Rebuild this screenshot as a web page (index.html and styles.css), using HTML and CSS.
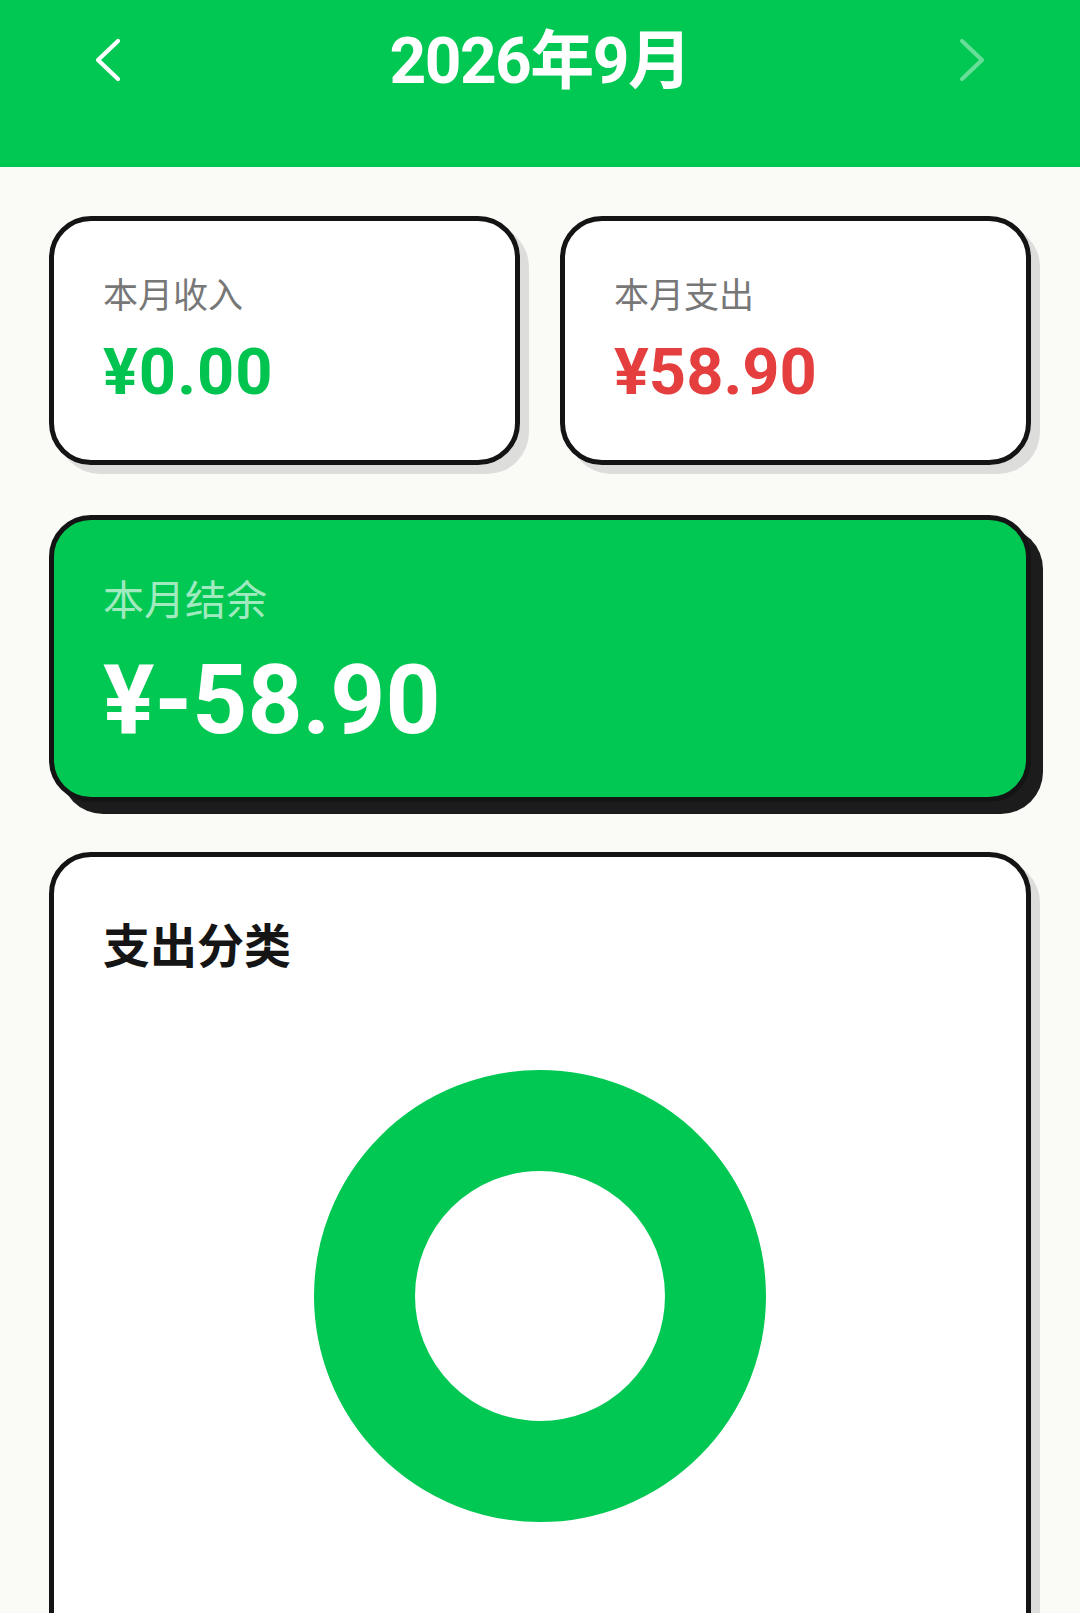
FILE: index.html
```html
<!DOCTYPE html>
<html lang="zh-CN">
<head>
<meta charset="utf-8">
<title>2026年9月</title>
<link rel="stylesheet" href="styles.css">
</head>
<body>
<header class="topbar">
  <button class="nav-btn" aria-label="上个月">
    <svg class="chev" viewBox="0 0 28 44" width="28" height="44"><polyline points="24,3 4,22 24,41" fill="none" stroke="#fff" stroke-width="4.2" stroke-linecap="round" stroke-linejoin="round"/></svg>
  </button>
  <h1 class="month">2026年9月</h1>
  <button class="nav-btn nav-next" aria-label="下个月">
    <svg class="chev" viewBox="0 0 28 44" width="28" height="44"><polyline points="4,3 24,22 4,41" fill="none" stroke="#fff" stroke-width="4.2" stroke-linecap="round" stroke-linejoin="round"/></svg>
  </button>
</header>

<main class="content">
  <section class="stats">
    <div class="card small">
      <div class="label">本月收入</div>
      <div class="amount income">¥0.00</div>
    </div>
    <div class="card small">
      <div class="label">本月支出</div>
      <div class="amount expense">¥58.90</div>
    </div>
  </section>

  <section class="card balance">
    <div class="balance-label">本月结余</div>
    <div class="balance-amount">¥-58.90</div>
  </section>

  <section class="card chart-card">
    <h2 class="chart-title">支出分类</h2>
    <div class="donut-wrap">
      <svg class="donut" viewBox="0 0 452 452" width="452" height="452">
        <circle cx="226" cy="226" r="175.5" fill="none" stroke="#00C853" stroke-width="101"/>
      </svg>
    </div>
  </section>
</main>
</body>
</html>
```

FILE: styles.css
```css
* {
  box-sizing: border-box;
}

html, body {
  margin: 0;
  padding: 0;
}

body {
  background: #fafaf7;
  font-family: "Roboto", "Noto Sans CJK SC", sans-serif;
  color: #111;
}

.topbar {
  height: 167px;
  background: #00c853;
  display: flex;
  justify-content: space-between;
  align-items: flex-start;
  padding: 26px 92px 0 92px;
}

.nav-btn {
  background: none;
  border: 0;
  padding: 0;
  margin-top: 12px;
  width: 32px;
  height: 44px;
  display: flex;
  align-items: center;
  justify-content: center;
}

.nav-next {
  opacity: 0.4;
}

.month {
  margin: 0;
  font-size: 64px;
  line-height: 72px;
  font-weight: 700;
  color: #fff;
  font-family: "Roboto", "Noto Sans CJK SC", sans-serif;
  letter-spacing: -1.5px;
}

.content {
  padding: 49px 49px 0 49px;
  display: flex;
  flex-direction: column;
  gap: 50px;
}

.stats {
  display: grid;
  grid-template-columns: 1fr 1fr;
  gap: 40px;
}

.card {
  border: 5px solid #141414;
  border-radius: 42px;
  background: #fff;
}

.small {
  padding: 52px 49px 53px 49px;
  box-shadow: 9px 9px 0 #dddddb;
}

.label {
  font-family: "Noto Sans CJK SC", sans-serif;
  font-size: 35px;
  line-height: 40px;
  color: #777;
}

.amount {
  margin-top: 24px;
  font-family: "Roboto", sans-serif;
  font-weight: 700;
  font-size: 65px;
  line-height: 70px;
}

.income {
  color: #00c44f;
  letter-spacing: 1px;
}

.expense {
  color: #e53e3e;
}

.balance {
  background: #00c853;
  padding: 54px 49px 47px 49px;
  box-shadow: 12px 12px 0 #1c1c1c;
}

.balance-label {
  font-family: "Noto Sans CJK SC", sans-serif;
  font-size: 41px;
  line-height: 46px;
  color: rgba(255, 255, 255, 0.65);
}

.balance-amount {
  margin-top: 30px;
  font-family: "Roboto", sans-serif;
  font-weight: 700;
  font-size: 96px;
  line-height: 100px;
  color: #fff;
}

.chart-card {
  padding: 59px 49px 80px 49px;
  min-height: 900px;
  box-shadow: 9px 9px 0 #dddddb;
}

.chart-title {
  margin: 0;
  font-family: "Noto Sans CJK SC", sans-serif;
  font-weight: 700;
  font-size: 47px;
  line-height: 54px;
  color: #151515;
}

.donut-wrap {
  display: flex;
  justify-content: center;
  margin-top: 100px;
}

.donut {
  display: block;
}
```
